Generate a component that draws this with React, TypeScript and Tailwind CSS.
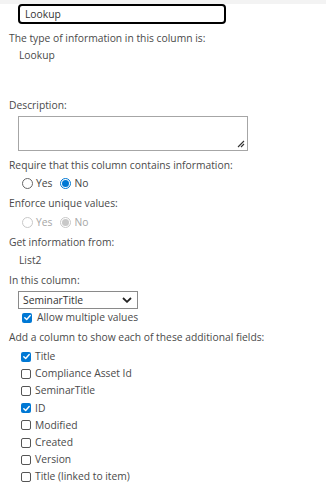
import React from "react";

const font = { fontFamily: '"Open Sans", "Noto Sans", sans-serif' };

function Radio({ checked, disabled }: { checked?: boolean; disabled?: boolean }) {
	const ring = disabled ? "border-[#c8c8c8]" : checked ? "border-[#0078d4]" : "border-[#666]";
	const dot = disabled ? "bg-[#c8c8c8]" : "bg-[#0078d4]";
	return (
		<span className={`flex size-[11px] items-center justify-center rounded-full border bg-white ${ring}`}>
			{checked && <span className={`size-[7px] rounded-full ${dot}`} />}
		</span>
	);
}

function Check({ checked }: { checked?: boolean }) {
	if (checked) {
		return (
			<span className="flex size-[10px] items-center justify-center rounded-[2px] bg-[#0078d4]">
				<svg viewBox="0 0 10 10" className="size-[9px]">
					<path d="M2 5.2 L4.1 7.2 L8 2.8" fill="none" stroke="#fff" strokeWidth="1.6" strokeLinecap="round" strokeLinejoin="round" />
				</svg>
			</span>
		);
	}
	return <span className="size-[10px] rounded-[2px] border border-[#555] bg-white" />;
}

function RadioRow({ disabled, className }: { disabled?: boolean; className: string }) {
	const text = disabled ? "text-[#a6a6a6]" : "text-[#444]";
	return (
		<div className={`flex h-[17px] items-center pl-[22px] ${className}`}>
			<Radio disabled={disabled} />
			<span className={`ml-[3px] ${text}`}>Yes</span>
			<span className="ml-[8px]">
				<Radio checked disabled={disabled} />
			</span>
			<span className={`ml-[3px] ${text}`}>No</span>
		</div>
	);
}

const fields = [
	{ label: "Title", checked: true },
	{ label: "Compliance Asset Id" },
	{ label: "SeminarTitle" },
	{ label: "ID", checked: true },
	{ label: "Modified" },
	{ label: "Created" },
	{ label: "Version" },
	{ label: "Title (linked to item)" },
];

export default function App() {
	return (
		<div className="h-[487px] w-[326px] overflow-hidden bg-white text-[10.3px] leading-[17px] text-[#4a4a4a]" style={font}>
			<div className="h-[4px] bg-[#f3f3f3]" />
			<div className="pl-[18px]">
				<div className="flex h-[20px] w-[208px] items-center rounded-[4px] border-2 border-black pl-[5px] text-[#333]">
					Lookup
				</div>
			</div>
			<div className="px-[9px]">
				<div className="mt-[6px] h-[17px]">The type of information in this column is:</div>
				<div className="h-[17px] pl-[10px]">Lookup</div>

				<div className="mt-[33px] h-[17px]">Description:</div>
				<div className="relative ml-[9px] mt-[2px] h-[35px] w-[230px] border border-[#a6a6a6] bg-white">
					<svg viewBox="0 0 8 8" className="absolute bottom-[2px] right-[2px] size-[8px]">
						<path d="M1 7 L7 1 M4 7 L7 4" stroke="#333" strokeWidth="1.1" />
					</svg>
				</div>

				<div className="mt-[6px] h-[17px]">Require that this column contains information:</div>
				<RadioRow className="mt-[1px] -ml-[9px]" />

				<div className="mt-[3px] h-[17px]">Enforce unique values:</div>
				<RadioRow disabled className="mt-[2px] -ml-[9px]" />

				<div className="mt-[3px] h-[17px]">Get information from:</div>
				<div className="mt-[1px] h-[17px] pl-[10px]">List2</div>

				<div className="mt-[3px] h-[17px]">In this column:</div>
				<div className="ml-[9px] mt-[2px] flex h-[18px] w-[120px] items-center justify-between border border-[#8a8a8a] pl-[4px] pr-[5px] text-[#333]">
					<span>SeminarTitle</span>
					<svg viewBox="0 0 10 6" className="h-[6px] w-[10px]">
						<path d="M1 1 L5 4.8 L9 1" fill="none" stroke="#222" strokeWidth="1.8" />
					</svg>
				</div>
				<div className="flex h-[17px] items-center pl-[13px]">
					<Check checked />
					<span className="ml-[5px]">Allow multiple values</span>
				</div>

				<div className="mt-[3px] h-[17px]">Add a column to show each of these additional fields:</div>
				<div className="mt-[2px]">
					{fields.map((f) => (
						<div key={f.label} className="flex h-[17.2px] items-center pl-[12px]">
							<Check checked={f.checked} />
							<span className="ml-[4px]">{f.label}</span>
						</div>
					))}
				</div>
			</div>
		</div>
	);
}
